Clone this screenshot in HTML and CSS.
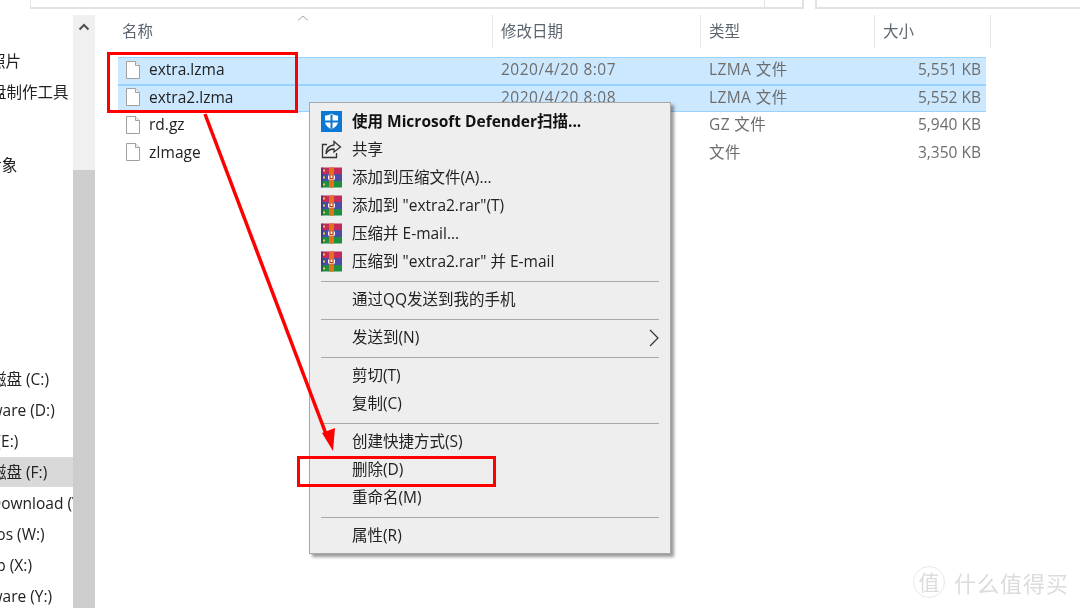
FILE: index.html
```html
<!doctype html>
<html lang="zh-CN">
<head>
    <meta charset="UTF-8">
    <title>文件资源管理器</title>
    <link rel="stylesheet" href="styles.css">
</head>
<body>
    <svg class="defs" width="0" height="0">
        <symbol id="page" viewBox="0 0 14 18">
            <path d="M.5.5h9l4 4v13H.5z" fill="#fff" stroke="#a0a0a0"/>
            <path d="M9.500.5v4h4" fill="#f2f2f2" stroke="#a0a0a0"/>
        </symbol>
        <symbol id="rar" viewBox="0 0 21 20">
            <rect x="0" y="0" width="21" height="6.500" fill="#c42a5c"/>
            <rect x="0" y="6.500" width="21" height="7" fill="#4b4aa6"/>
            <rect x="0" y="13.500" width="21" height="6.500" fill="#1e8f3e"/>
            <rect x="0" y="0" width="2" height="20" fill="#2e2e60" opacity=".5"/>
            <rect x="2" y="2" width="2" height="2" fill="#e8c850"/>
            <rect x="2" y="9" width="2" height="2" fill="#e8c850"/>
            <rect x="2" y="16" width="2" height="2" fill="#e8c850"/>
            <rect x="8" y="0" width="5" height="20" fill="#e2701c"/>
            <path d="M7 8h7v4H7z" fill="#fff"/>
            <path d="M9 7.500v3.500h3V7.500" fill="none" stroke="#c03020" stroke-width="1.200"/>
        </symbol>
    </svg>

    <div class="page">
        <div class="topbar">
            <div class="addr"></div>
            <div class="addr-btn"></div>
            <div class="search"></div>
        </div>

        <div class="main">
            <div class="side">
                <div class="side-group1">
                    <div class="side-item ind-photo">图片照片</div>
                    <div class="side-item ind-tool">启动盘制作工具</div>
                    <div class="side-item side-gap ind-obj">3D 对象</div>
                </div>
                <div class="side-group2">
                    <div class="side-item ind-disk">本地磁盘 (C:)</div>
                    <div class="side-item ind-ware">Software (D:)</div>
                    <div class="side-item ind-e">新加卷 (E:)</div>
                    <div class="side-item ind-disk side-on">本地磁盘 (F:)</div>
                    <div class="side-item ind-down">Download (V:)</div>
                    <div class="side-item ind-os">Videos (W:)</div>
                    <div class="side-item ind-x">App (X:)</div>
                    <div class="side-item ind-ware">Software (Y:)</div>
                </div>
            </div>
            <div class="scroll">
                <svg class="scroll-up" width="12" height="8" viewBox="0 0 12 8"><path d="M1.500 6.500 6 2l4.500 4.500" fill="none" stroke="#505050" stroke-width="2"/></svg>
                <div class="scroll-thumb"></div>
            </div>

            <div class="list">
                <svg class="sort" width="12" height="6" viewBox="0 0 12 6"><path d="M1 5.500 6 1l5 4.500" fill="none" stroke="#a9a9a9"/></svg>
                <div class="head">
                    <div class="hcell h1">名称</div>
                    <div class="hcell h2">修改日期</div>
                    <div class="hcell h3">类型</div>
                    <div class="hcell h4">大小</div>
                </div>
                <div class="row sel">
                    <div class="name"><svg class="ficon"><use href="#page"/></svg>extra.lzma</div>
                    <div class="date">2020/4/20 8:07</div>
                    <div class="type">LZMA 文件</div>
                    <div class="size">5,551 KB</div>
                </div>
                <div class="row sel">
                    <div class="name"><svg class="ficon"><use href="#page"/></svg>extra2.lzma</div>
                    <div class="date">2020/4/20 8:08</div>
                    <div class="type">LZMA 文件</div>
                    <div class="size">5,552 KB</div>
                </div>
                <div class="row">
                    <div class="name"><svg class="ficon"><use href="#page"/></svg>rd.gz</div>
                    <div class="date">2020/4/20 8:08</div>
                    <div class="type">GZ 文件</div>
                    <div class="size">5,940 KB</div>
                </div>
                <div class="row">
                    <div class="name"><svg class="ficon"><use href="#page"/></svg>zImage</div>
                    <div class="date">2020/4/20 8:08</div>
                    <div class="type">文件</div>
                    <div class="size">3,350 KB</div>
                </div>
            </div>
        </div>

        <div class="menu">
            <div class="mi mi-bold">
                <svg class="micon" viewBox="0 0 21 21">
                    <rect width="21" height="21" fill="#0b78d4"/>
                    <path d="M10.500 2.500c2 1.500 4.500 2 6.500 2v6c0 3.500-3 5.800-6.500 8-3.500-2.200-6.500-4.500-6.500-8v-6c2 0 4.500-.5 6.500-2z" fill="#fff"/>
                    <path d="M9.500 3.500h2v15h-2zM4 9.500h13v2H4z" fill="#0b78d4"/>
                </svg>
                使用 Microsoft Defender扫描...
            </div>
            <div class="mi">
                <svg class="micon" viewBox="0 0 21 21">
                    <path d="M6 5.500H1.500v13h14V14" fill="none" stroke="#333" stroke-width="1.300"/>
                    <path d="M13 2.500l6.500 5.500-6.500 5v-3c-4 0-6.500 1.500-8 5 0-5 3-8.500 8-9z" fill="none" stroke="#333" stroke-width="1.300"/>
                </svg>
                共享
            </div>
            <div class="mi"><svg class="micon"><use href="#rar"/></svg>添加到压缩文件(A)...</div>
            <div class="mi"><svg class="micon"><use href="#rar"/></svg>添加到 "extra2.rar"(T)</div>
            <div class="mi"><svg class="micon"><use href="#rar"/></svg>压缩并 E-mail...</div>
            <div class="mi"><svg class="micon"><use href="#rar"/></svg>压缩到 "extra2.rar" 并 E-mail</div>
            <div class="sep"></div>
            <div class="mi">通过QQ发送到我的手机</div>
            <div class="sep"></div>
            <div class="mi mi-sub">
                发送到(N)
                <svg class="chev" width="10" height="20" viewBox="0 0 10 20"><path d="M1 2l8 8-8 8" fill="none" stroke="#333" stroke-width="1.200"/></svg>
            </div>
            <div class="sep"></div>
            <div class="mi">剪切(T)</div>
            <div class="mi">复制(C)</div>
            <div class="sep"></div>
            <div class="mi">创建快捷方式(S)</div>
            <div class="mi">删除(D)</div>
            <div class="mi">重命名(M)</div>
            <div class="sep"></div>
            <div class="mi">属性(R)</div>
        </div>

        <div class="mark mark-files"></div>
        <div class="mark mark-del"></div>
        <svg class="arrow" width="1080" height="608" viewBox="0 0 1080 608">
            <path d="M205 114 326 434" stroke="#f00" stroke-width="3.500" fill="none"/>
            <path d="M333 451 322 433 335 428z" fill="#f00"/>
        </svg>

        <div class="logo">
            <span class="logo-c">值</span>
            <span class="logo-t">什么值得买</span>
        </div>
    </div>
</body>
</html>
```

FILE: styles.css
```css
body{
    margin:0;
    background:#fff;
}
.defs{
    position:absolute;
}
.page{
    width:1080px;
    height:608px;
    position:relative;
    overflow:hidden;
    background:#fff;
    font-family:"Open Sans","Noto Sans CJK SC",sans-serif;
    font-size:15.5px;
    color:#222;
    filter:blur(.35px);
}

.topbar{
    display:flex;
    height:9px;
    padding-left:30px;
    box-sizing:border-box;
}
.addr{
    width:735px;
    border:solid #e3e3e3;
    border-width:0 1px 2px 1px;
    box-sizing:border-box;
}
.addr-btn{
    width:39px;
    border:solid #e3e3e3;
    border-width:0 2px 2px 0;
    box-sizing:border-box;
}
.search{
    flex:1;
    margin-left:11px;
    border:solid #e3e3e3;
    border-width:0 0 2px 2px;
}

.main{
    display:flex;
    height:599px;
}
.side{
    width:73px;
    overflow:hidden;
    white-space:nowrap;
    flex:none;
}
.side-group1{
    padding-top:37px;
}
.side-group2{
    padding-top:183px;
}
.side-item{
    height:31px;
    line-height:30px;
}
.side-gap{
    margin-top:42px;
}
.side-on{
    height:30px;
    margin-bottom:1px;
    background:#d9d9d9;
}
.ind-photo{ text-indent:-41px; }
.ind-tool{ text-indent:-40px; }
.ind-obj{ text-indent:-38px; }
.ind-disk{ text-indent:-40px; }
.ind-ware{ text-indent:-38px; }
.ind-e{ text-indent:-54px; }
.ind-down{ text-indent:-10px; }
.ind-os{ text-indent:-35px; }
.ind-x{ text-indent:-23px; }

.scroll{
    width:22px;
    flex:none;
    margin-top:6px;
    background:#f0f0f0;
    display:flex;
    flex-direction:column;
    align-items:center;
}
.scroll-up{
    margin-top:8px;
}
.scroll-thumb{
    margin-top:139px;
    flex:1;
    width:100%;
    background:#cdcdcd;
}

.list{
    position:relative;
    margin-left:23px;
    width:873px;
    padding-top:6px;
}
.sort{
    position:absolute;
    left:179px;
    top:6px;
}
.head{
    display:flex;
    height:33px;
    margin-bottom:9px;
    color:#5c6670;
    line-height:32px;
}
.hcell{
    border-right:1px solid #e6e6e6;
    box-sizing:border-box;
    padding-left:8px;
}
.h1{ width:375px; padding-left:4px; }
.h2{ width:208px; }
.h3{ width:174px; }
.h4{ width:116px; }

.row{
    display:grid;
    grid-template-columns:383px 208px 190px 82px;
    width:868px;
    height:27.5px;
    padding-bottom:2px;
    line-height:25.5px;
    box-sizing:border-box;
    color:#6d6d6d;
}
.sel{
    background:#cce8ff;
    box-shadow:inset 0 1px #99d1ff, inset 0 -1px #99d1ff;
}
.name{
    display:flex;
    align-items:center;
    gap:9px;
    padding-left:8px;
    color:#222;
}
.ficon{
    width:14px;
    height:18px;
    flex:none;
}
.date{
    letter-spacing:.5px;
}
.type{
    letter-spacing:.4px;
}
.size{
    text-align:right;
}

.menu{
    position:absolute;
    left:309px;
    top:102px;
    width:362px;
    height:452px;
    box-sizing:border-box;
    padding-top:5px;
    background:#eee;
    border:1px solid #a8a8a8;
    box-shadow:3px 3px 3px rgba(0,0,0,.4);
    color:#222;
}
.mi{
    display:flex;
    align-items:center;
    height:28px;
    padding-left:42px;
    padding-bottom:3px;
    box-sizing:border-box;
    position:relative;
}
.mi-bold{
    font-weight:700;
    color:#111;
}
.mi-sub{
    justify-content:space-between;
    padding-right:11px;
}
.chev{
    margin-top:3px;
}
.micon{
    position:absolute;
    left:11px;
    top:3px;
    width:21px;
    height:21px;
}
.sep{
    height:1px;
    margin:5px 11px 4px;
    background:#a9a9a9;
}

.mark{
    position:absolute;
    border:3px solid #f00;
    box-sizing:border-box;
}
.mark-files{
    left:107px;
    top:52px;
    width:191px;
    height:61px;
}
.mark-del{
    left:297px;
    top:456px;
    width:199px;
    height:31px;
}
.arrow{
    position:absolute;
    left:0;
    top:0;
}

.logo{
    position:absolute;
    left:913px;
    top:566px;
    display:flex;
    align-items:center;
    gap:9px;
    color:#dcdcdc;
    font-family:"Noto Sans CJK SC",sans-serif;
}
.logo-c{
    width:32px;
    height:32px;
    box-sizing:border-box;
    border:1px solid #e8e8e8;
    border-radius:50%;
    font-size:21px;
    line-height:29px;
    text-align:center;
}
.logo-t{
    font-size:22px;
    letter-spacing:1px;
}
```
